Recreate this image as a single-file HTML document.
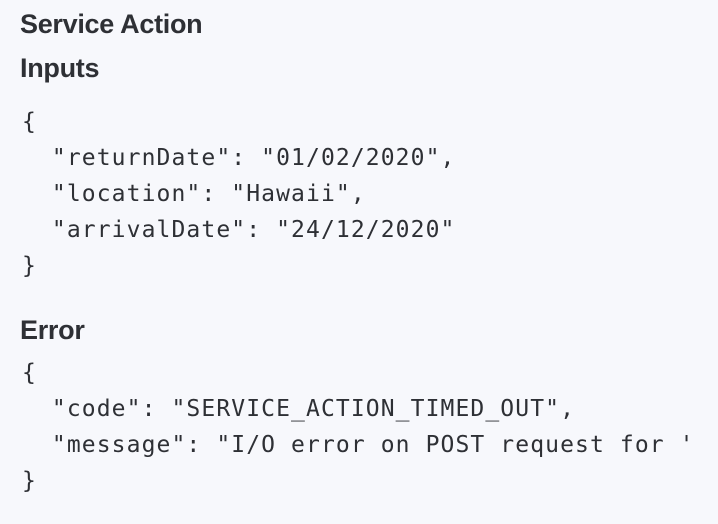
<!DOCTYPE html>
<html><head><style>
html,body{margin:0;padding:0;width:718px;height:524px;background:#f7f8fc;overflow:hidden}
body{color:#2e3035;position:relative}
.h{position:absolute;left:20px;font:bold 27px "Liberation Sans",sans-serif;line-height:30px;white-space:nowrap;letter-spacing:-0.3px}
.m{position:absolute;left:22px;font:23px "DejaVu Sans Mono",monospace;letter-spacing:1.1px;line-height:36px;white-space:pre;margin:0}
</style></head><body>
<div class="h" style="top:9px">Service Action</div>
<div class="h" style="top:53px">Inputs</div>
<pre class="m" style="top:104px">{
  "returnDate": "01/02/2020",
  "location": "Hawaii",
  "arrivalDate": "24/12/2020"
}</pre>
<div class="h" style="top:315px">Error</div>
<pre class="m" style="top:355px">{
  "code": "SERVICE_ACTION_TIMED_OUT",
  "message": "I/O error on POST request for '
}</pre>
</body></html>
